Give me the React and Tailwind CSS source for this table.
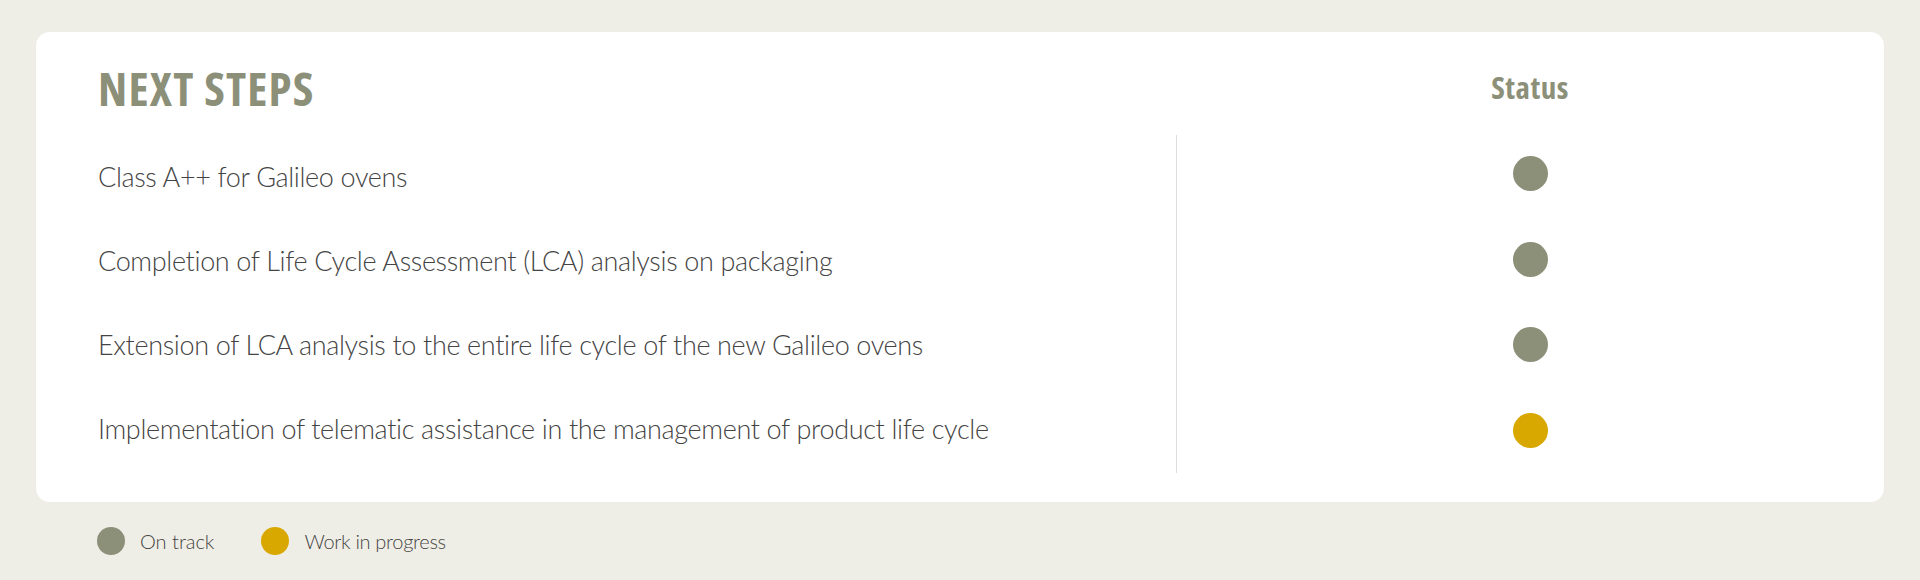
const steps = [
  { label: "Class A++ for Galileo ovens", status: "track" },
  { label: "Completion of Life Cycle Assessment (LCA) analysis on packaging", status: "track" },
  { label: "Extension of LCA analysis to the entire life cycle of the new Galileo ovens", status: "track" },
  { label: "Implementation of telematic assistance in the management of product life cycle", status: "progress" },
];

const Dot = ({ status, size }) => (
  <span
    className={`${status === "progress" ? "bg-[#d9a800]" : "bg-[#8c9079]"} ${
      size === "sm" ? "w-[28px] h-[28px]" : "w-[35px] h-[35px]"
    } rounded-full inline-block shrink-0`}
  />
);

const App = () => {
  return (
    <div className="min-h-[580px] bg-[#efeee6] px-[36px] pt-[32px] font-['Lato',sans-serif]">
      <div className="bg-white rounded-[14px] h-[470px] flex flex-col">
        {/* header */}
        <div className="h-[103px] flex">
          <div className="w-[1140px] pl-[62px] pt-[33px]">
            <h1 className="font-['Open_Sans',sans-serif] font-bold font-stretch-85% text-[47px] leading-none tracking-[1.2px] text-[#8c9079]">
              NEXT STEPS
            </h1>
          </div>
          <div className="flex-1 flex justify-center pt-[40px]">
            <h2 className="font-['Open_Sans',sans-serif] font-bold font-stretch-85% text-[31px] leading-none tracking-[0.5px] text-[#8c9079]">
              Status
            </h2>
          </div>
        </div>

        {/* rows */}
        <div className="flex">
          <div className="w-[1140px] pl-[62px]">
            {steps.map((s) => (
              <div key={s.label} className="h-[84px] flex items-center text-[27px] font-light tracking-[-0.35px] text-[#444444]">
                {s.label}
              </div>
            ))}
          </div>
          <div className="flex-1 border-l border-[#dddddd]">
            <div className="-mt-[4px]">
              {steps.map((s) => (
                <div key={s.label} className="h-[85.5px] flex items-center justify-center">
                  <Dot status={s.status} />
                </div>
              ))}
            </div>
          </div>
        </div>
      </div>

      {/* legend */}
      <div className="flex items-center pl-[61px] pt-[24px] text-[20px] font-light text-[#444444]">
        <div className="flex items-center gap-[15px]">
          <Dot status="track" size="sm" />
          <span>On track</span>
        </div>
        <div className="flex items-center gap-[15px] ml-[47px]">
          <Dot status="progress" size="sm" />
          <span className="tracking-[-0.3px]">Work in progress</span>
        </div>
      </div>
    </div>
  );
};

export default App;
